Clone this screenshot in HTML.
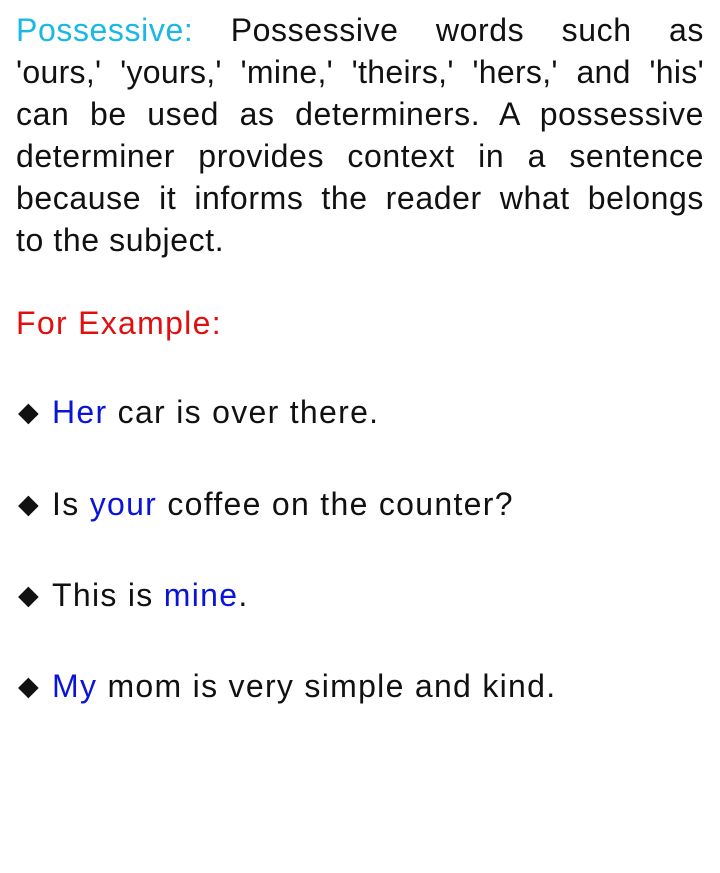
<!DOCTYPE html>
<html><head><meta charset="utf-8"><style>
html,body{margin:0;padding:0;background:#fff;width:720px;height:873px;overflow:hidden}
body{font-family:"Liberation Sans",sans-serif;font-size:32px;color:#111;letter-spacing:1.3px}
.p{position:absolute;left:16px;top:9px;width:688px;line-height:42px;letter-spacing:0.6px}
.p div{text-align:justify;text-align-last:justify;white-space:nowrap;height:42px}
.p div.last{text-align-last:left}
.c{color:#1ab8e6}.r{color:#e01010}.b{color:#0a14d8}
.l{position:absolute;left:52px;white-space:nowrap;line-height:42px}
.d{position:absolute;left:-34px;top:0;font-size:27px;letter-spacing:0}
</style></head><body>
<div class="p">
<div><span class="c">Possessive:</span> Possessive words such as</div>
<div style="letter-spacing:0.3px">'ours,' 'yours,' 'mine,' 'theirs,' 'hers,' and 'his'</div>
<div>can be used as determiners. A possessive</div>
<div>determiner provides context in a sentence</div>
<div>because it informs the reader what belongs</div>
<div class="last">to the subject.</div>
</div>
<div class="l r" style="left:16px;top:302px">For Example:</div>
<div class="l" style="top:391px"><span class="d">◆</span><span class="b">Her</span> car is over there.</div>
<div class="l" style="top:483px"><span class="d">◆</span>Is <span class="b">your</span> coffee on the counter?</div>
<div class="l" style="top:574px"><span class="d">◆</span>This is <span class="b">mine</span>.</div>
<div class="l" style="top:665px"><span class="d">◆</span><span class="b">My</span> mom is very simple and kind.</div>
</body></html>
